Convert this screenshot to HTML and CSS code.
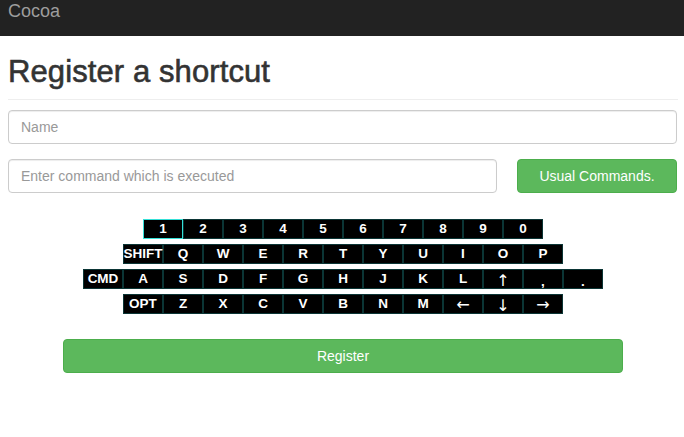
FILE: index.html
```html
<!DOCTYPE html>
<html>
<head>
<meta charset="utf-8">
<title>Cocoa</title>
<link rel="stylesheet" href="styles.css">
</head>
<body>
<nav class="navbar"><span class="brand">Cocoa</span></nav>
<main class="container">
  <h1 class="title">Register a shortcut</h1>
  <hr class="rule">
  <input class="field field-full" type="text" placeholder="Name">
  <div class="command-row">
    <input class="field field-command" type="text" placeholder="Enter command which is executed">
    <button class="btn btn-usual" type="button">Usual Commands.</button>
  </div>
  <div class="keyboard">
    <div class="key-row">
      <span class="key key-active">1</span><span class="key">2</span><span class="key">3</span><span class="key">4</span><span class="key">5</span><span class="key">6</span><span class="key">7</span><span class="key">8</span><span class="key">9</span><span class="key">0</span>
    </div>
    <div class="key-row">
      <span class="key">SHIFT</span><span class="key">Q</span><span class="key">W</span><span class="key">E</span><span class="key">R</span><span class="key">T</span><span class="key">Y</span><span class="key">U</span><span class="key">I</span><span class="key">O</span><span class="key">P</span>
    </div>
    <div class="key-row">
      <span class="key">CMD</span><span class="key">A</span><span class="key">S</span><span class="key">D</span><span class="key">F</span><span class="key">G</span><span class="key">H</span><span class="key">J</span><span class="key">K</span><span class="key">L</span><span class="key key-arrow key-vert">↑</span><span class="key key-punct">,</span><span class="key key-punct">.</span>
    </div>
    <div class="key-row">
      <span class="key">OPT</span><span class="key">Z</span><span class="key">X</span><span class="key">C</span><span class="key">V</span><span class="key">B</span><span class="key">N</span><span class="key">M</span><span class="key key-arrow">←</span><span class="key key-arrow key-vert">↓</span><span class="key key-arrow">→</span>
    </div>
  </div>
  <button class="btn btn-register" type="button">Register</button>
</main>
</body>
</html>
```
FILE: styles.css
```css
* { box-sizing: border-box; }
body {
  margin: 0;
  font-family: "Liberation Sans", Arial, sans-serif;
  font-size: 14px;
  color: #333;
  background: #fff;
}
.navbar {
  height: 36px;
  background: #222;
  padding: 1px 8px 0;
}
.brand {
  display: block;
  font-size: 18px;
  line-height: 20px;
  color: #9d9d9d;
}
.container {
  padding: 0 6px 0 8px;
}
.title {
  margin: 19px 0 0;
  font-size: 31px;
  font-weight: 500;
  line-height: 34px;
  color: #333;
  -webkit-text-stroke: 0.6px #333;
  letter-spacing: 0.1px;
}
.rule {
  margin: 10px 0 0;
  border: 0;
  border-top: 1px solid #eee;
  height: 0;
}
.field {
  display: block;
  height: 34px;
  padding: 6px 12px;
  font-family: inherit;
  font-size: 14px;
  color: #555;
  background: #fff;
  border: 1px solid #ccc;
  border-radius: 4px;
  box-shadow: inset 0 1px 1px rgba(0,0,0,0.075);
}
.field::placeholder { color: #999; }
.field-full {
  width: 669px;
  margin-top: 10px;
}
.command-row {
  display: flex;
  margin-top: 15px;
  gap: 20px;
}
.field-command {
  width: 489px;
}
.btn {
  height: 34px;
  font-family: inherit;
  font-size: 14px;
  color: #fff;
  background: #5cb85c;
  border: 1px solid #4cae4c;
  border-radius: 4px;
  padding: 6px 12px;
}
.btn-usual {
  width: 160px;
}
.keyboard {
  margin-top: 26px;
  display: flex;
  flex-direction: column;
  gap: 5px;
}
.key-row {
  display: flex;
  justify-content: center;
}
.key {
  width: 40px;
  height: 20px;
  display: flex;
  align-items: center;
  justify-content: center;
  background: #000;
  border: 1px solid #0b3535;
  color: #fff;
  font-weight: bold;
  font-size: 13.5px;
  line-height: 1;
  white-space: nowrap;
}
.key-active {
  border-color: #35e0d8;
}
.key-arrow {
  font-family: "DejaVu Sans", sans-serif;
  font-weight: normal;
  font-size: 16px;
  padding-top: 2px;
}
.key-vert {
  padding-top: 3px;
}
.key-punct {
  padding-top: 5px;
}
.btn-register {
  display: block;
  width: 560px;
  margin: 25px auto 0;
}
```
